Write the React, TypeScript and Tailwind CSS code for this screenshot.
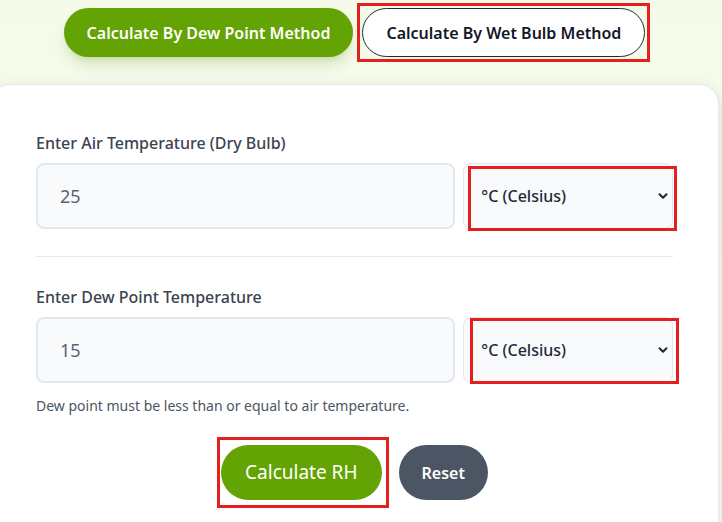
import { ChevronDown } from 'lucide-react'

const font = { fontFamily: '"Noto Sans", "Open Sans", sans-serif' }

function RedBox({ className }: { className: string }) {
  return <span className={`pointer-events-none absolute border-[3px] border-[#e3201f] ${className}`} />
}

function UnitSelect({ box }: { box: string }) {
  return (
    <div className="relative">
      <select
        defaultValue="c"
        className="h-[66px] w-full appearance-none rounded-lg border border-[#e2e8f0] bg-[#f8fafc] pl-[17px] text-[16px] font-medium text-[#1f2937] outline-none"
      >
        <option value="c">°C (Celsius)</option>
        <option value="f">°F (Fahrenheit)</option>
        <option value="k">K (Kelvin)</option>
      </select>
      <ChevronDown className="pointer-events-none absolute right-[3px] top-1/2 h-[14px] w-[14px] -translate-y-1/2 text-[#1f2937]" strokeWidth={3.5} />
      <RedBox className={box} />
    </div>
  )
}

function TempField({ label, value, box }: { label: string; value: string; box: string }) {
  return (
    <div>
      <label className="mb-2 block text-[16px] font-medium leading-6 text-[#3b4452]">{label}</label>
      <div className="grid grid-cols-[2fr_1fr] gap-2">
        <input
          defaultValue={value}
          className="h-[66px] w-full rounded-lg border-2 border-[#e2e8f0] bg-[#f8fafc] px-[22px] text-[18px] text-[#5b6270] outline-none"
        />
        <UnitSelect box={box} />
      </div>
    </div>
  )
}

export default function App() {
  return (
    <div
      style={font}
      className="h-[522px] w-[722px] overflow-hidden bg-gradient-to-b from-[#f4fbea] to-[#fafdf3]"
    >
      <div className="flex w-[709px] justify-center gap-[9px] pt-[8px]">
        <button className="h-[49px] rounded-full bg-[#63a304] px-[23px] text-[16px] font-semibold text-white shadow-lg shadow-lime-700/20">
          Calculate By Dew Point Method
        </button>
        <div className="relative">
          <button className="h-[49px] rounded-full border border-[#1f2937] bg-white px-[23px] text-[16px] font-semibold text-[#111827]">
            Calculate By Wet Bulb Method
          </button>
          <RedBox className="-inset-[5px]" />
        </div>
      </div>

      <div className="ml-[-10px] mt-[27px] h-[460px] w-[729px] rounded-[20px] border border-[#e5e9f0] bg-white px-[45px] pt-[46px] shadow-[0_4px_14px_rgba(0,0,0,0.12)]">
        <TempField label="Enter Air Temperature (Dry Bulb)" value="25" box="left-[5px] -right-[4px] top-[3px] -bottom-[2px]" />
        <div className="mb-[28px] mt-[27px] h-px bg-[#e5e7eb]" />
        <TempField label="Enter Dew Point Temperature" value="15" box="left-[7px] -right-[6px] top-[1px] -bottom-[1px]" />
        <p className="mt-[13px] text-[14px] leading-5 text-[#4b5563]">
          Dew point must be less than or equal to air temperature.
        </p>
        <div className="mt-[29px] flex justify-center gap-[17px]">
          <div className="relative">
            <button className="h-[55px] rounded-full bg-[#63a304] px-[24px] text-[19px] text-white">Calculate RH</button>
            <RedBox className="-left-[4px] -right-[7px] -top-[8px] -bottom-[8px]" />
          </div>
          <button className="h-[55px] rounded-full bg-[#4b5563] px-[23px] text-[16px] font-semibold text-white">Reset</button>
        </div>
      </div>
    </div>
  )
}
